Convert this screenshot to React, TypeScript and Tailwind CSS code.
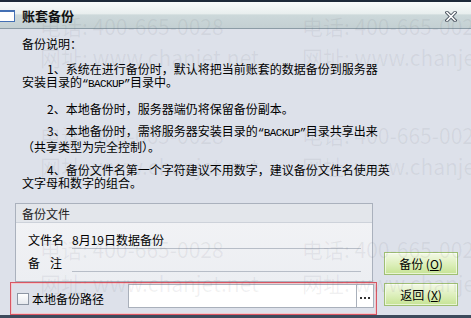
import React from 'react';

const FONT = "'Noto Sans CJK SC', 'Noto Sans', sans-serif";

const notes: { lines: React.ReactNode[]; mt: string }[] = [
  {
    mt: 'mt-[12px]',
    lines: [
      '1、系统在进行备份时，默认将把当前账套的数据备份到服务器',
      <>安装目录的<Quoted />目录中。</>,
    ],
  },
  { mt: 'mt-[11px]', lines: ['2、本地备份时，服务器端仍将保留备份副本。'] },
  {
    mt: 'mt-[9px]',
    lines: [
      <>3、本地备份时，需将服务器安装目录的<Quoted />目录共享出来</>,
      '（共享类型为完全控制）。',
    ],
  },
  {
    mt: 'mt-[10px]',
    lines: [
      '4、备份文件名第一个字符建议不用数字，建议备份文件名使用英',
      '文字母和数字的组合。',
    ],
  },
];

function Quoted() {
  return (
    <span className="font-['Liberation_Mono',monospace] text-[11px] tracking-[-0.6px]">“BACKUP”</span>
  );
}

function Watermark() {
  // faint vendor watermark tiled over the dialog
  const rows = [
    { y: 'top-[14px]', text: '电话: 400-665-0028' },
    { y: 'top-[45px]', text: '网址: www.chanjet.net' },
    { y: 'top-[123px]', text: '电话: 400-665-0028' },
    { y: 'top-[154px]', text: '网址: www.chanjet.net' },
    { y: 'top-[237px]', text: '电话: 400-665-0028' },
    { y: 'top-[271px]', text: '网址: www.chanjet.net' },
  ];
  return (
    <div className="pointer-events-none absolute inset-0">
      {rows.map((r, i) => (
        <div key={i} className={`absolute left-0 ${r.y} whitespace-nowrap text-[21px] leading-[24px] text-[rgba(95,100,115,0.09)]`}>
          <span className="absolute left-[40px]">{r.text}</span>
          <span className="absolute left-[302px]">{r.text}</span>
        </div>
      ))}
    </div>
  );
}

function GreenButton({ label, hot }: { label: string; hot: string }) {
  return (
    <button className="flex h-[23px] w-[74px] items-center justify-center border border-[#9fbf74] bg-[linear-gradient(to_bottom,#f3f9e6_0%,#dcefba_55%,#c6e394_100%)] text-[12px] leading-[13px] text-black shadow-[inset_0_0_0_1px_rgba(255,255,255,0.6)]">
      {label} (<span className="underline">{hot}</span>)
    </button>
  );
}

export default function App() {
  return (
    <div
      className="relative flex h-[318px] w-[471px] flex-col overflow-hidden bg-[#dde1ea] text-black"
      style={{ fontFamily: FONT }}
    >
      {/* top edge */}
      <div className="h-[2px] bg-[#1d2a3a]" />

      {/* title bar */}
      <div className="flex h-[27px] items-center border-b border-[#8c9ca6] bg-[linear-gradient(to_bottom,#f8fbfb_0%,#e8eeee_45%,#ccd8da_50%,#c4d0d3_100%)] pt-[2px]">
        <div className="h-[12px] w-[15px] border-y border-r border-t-2 border-[#4470b4] bg-white" />
        <span className="ml-[7px] text-[13px] font-bold leading-[14px] text-[#111]">账套备份</span>
        <svg className="ml-auto mr-[14px]" width="12" height="11" viewBox="0 0 12 11">
          <path d="M2 1.5 L10 9.5 M10 1.5 L2 9.5" stroke="#4b5560" strokeWidth="3.4" strokeLinecap="square" />
          <path d="M2 1.5 L10 9.5 M10 1.5 L2 9.5" stroke="#ffffff" strokeWidth="1.6" strokeLinecap="square" />
        </svg>
      </div>

      {/* body */}
      <div className="flex flex-1 flex-col">
        <div className="pl-[22px] pt-[8px] text-[12px] leading-[13px] whitespace-nowrap">
          <div>备份说明：</div>
          {notes.map((n, i) => (
            <div key={i} className={n.mt}>
              {n.lines.map((l, j) => (
                <div key={j} className={j === 0 ? 'pl-[25px]' : ''}>{l}</div>
              ))}
            </div>
          ))}
        </div>

        <div className="mt-[14px] flex pl-[10px]">
          <div className="flex w-[367px] flex-col">
            {/* group box */}
            <div className="ml-[5px] flex h-[79px] w-[358px] flex-col border border-[#aab1bd]">
              <div className="h-[19px] border-b border-[#cdd2da] bg-[#e3e6eb] pl-[6px] pt-[3px] text-[12px] leading-[13px] text-[#222]">
                备份文件
              </div>
              <div className="flex flex-1 flex-col bg-[linear-gradient(to_bottom,#f1f2f5,#eceef2)] pt-[4px] text-[12px] leading-[13px]">
                <div className="flex h-[22px] items-end pl-[12px]">
                  <div className="w-[44px] pb-[3px]">文件名</div>
                  <div className="flex h-full w-[289px] items-end border-b border-[#b7bdc7] pb-[2px]">8月19日数据备份</div>
                </div>
                <div className="mt-[1px] flex h-[22px] items-end pl-[12px]">
                  <div className="flex w-[44px] gap-[10px] pb-[3px]">
                    <span>备</span>
                    <span>注</span>
                  </div>
                  <div className="h-full w-[289px] border-b border-[#b7bdc7]" />
                </div>
              </div>
            </div>

            {/* local path row */}
            <div className="flex h-[33px] items-start border border-[#d85663] shadow-[inset_0_0_0_1px_#f1c9cd]">
              <div className="ml-[6px] mt-[10px] h-[12px] w-[12px] border border-[#8d96a3] bg-[linear-gradient(to_bottom,#ffffff,#e6e9ee)]" />
              <div className="ml-[3px] mt-[9px] w-[96px] text-[12px] leading-[13px]">本地备份路径</div>
              <div className="mt-[1px] h-[24px] w-[229px] border border-[#a9b0bb] bg-white" />
              <div className="mt-[1px] flex h-[24px] w-[17px] items-center justify-center gap-[2px] border border-l-0 border-[#a9b0bb] bg-white pt-[3px]">
                <span className="h-[2px] w-[2px] bg-[#333]" />
                <span className="h-[2px] w-[2px] bg-[#333]" />
                <span className="h-[2px] w-[2px] bg-[#333]" />
              </div>
            </div>
          </div>

          {/* buttons */}
          <div className="ml-[7px] flex flex-col gap-[8px] pt-[49px]">
            <GreenButton label="备份" hot="O" />
            <GreenButton label="返回" hot="X" />
          </div>
        </div>
      </div>

      {/* bottom edge */}
      <div className="h-[3px] bg-[#3c4a5c]" />

      <Watermark />
    </div>
  );
}
